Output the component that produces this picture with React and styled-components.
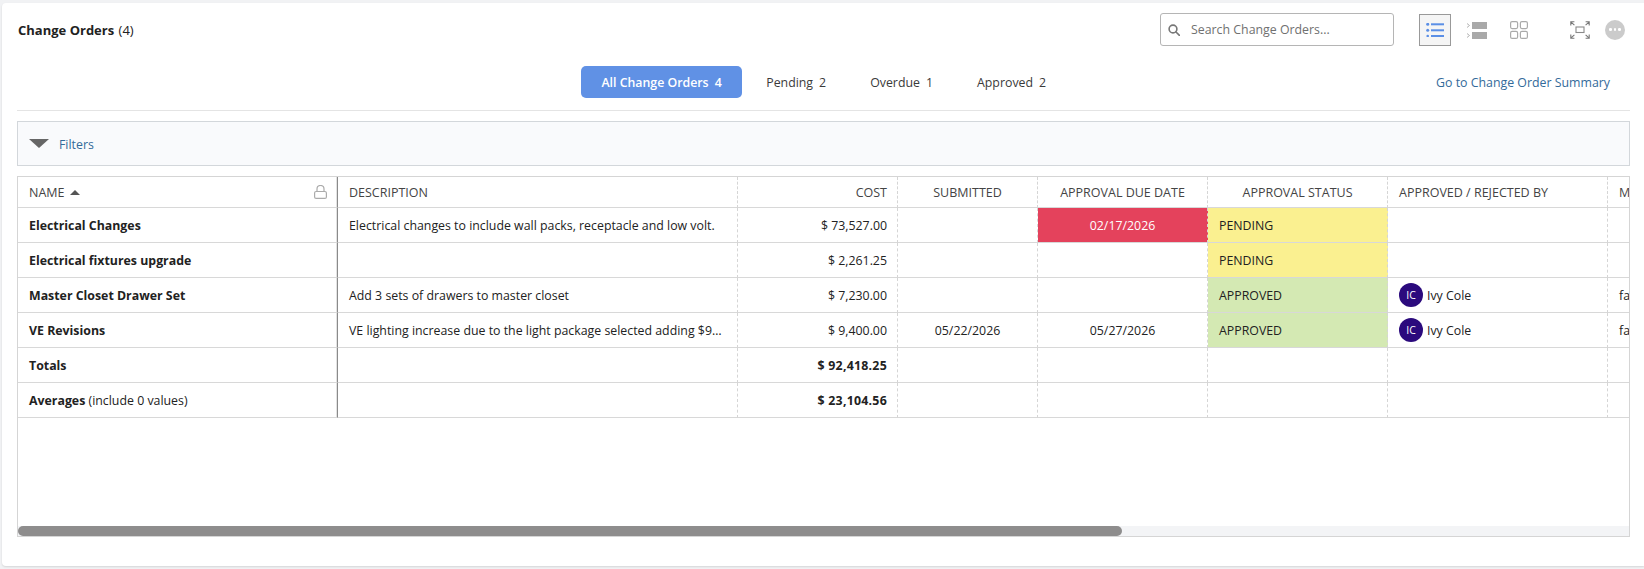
import React from 'react';
import styled, {createGlobalStyle} from 'styled-components';

const Global = createGlobalStyle`
html, body {
  margin: 0;
  padding: 0;
  background: #f1f2f4;
  font-family: "Open Sans", "Noto Sans", sans-serif;
  font-size: 12.35px;
  color: #222;
}
* { box-sizing: border-box; }
`

const Panel = styled.main`
margin: 3px 0 3px 2px;
height: 563px;
padding: 10px 14px 29px 15px;
background: #fff;
border-radius: 4px 0 0 4px;
box-shadow: 0 1px 2px rgba(0,0,0,.12);
`
const TopRow = styled.header`
display: flex;
align-items: center;
height: 33px;
padding-right: 5px;
`
const Title = styled.h1`
margin: 0;
padding: 0 0 0 1px;
font-size: 13px;
font-weight: 400;
color: #222;
flex: 1;
b { font-weight: 700; }
span { margin-left: 1px; }
`
const Search = styled.label`
display: flex;
align-items: center;
width: 234px;
height: 33px;
padding-left: 7px;
border: 1px solid #b5b5b5;
border-radius: 3px;
margin-right: 25px;
`
const SearchInput = styled.input`
border: 0;
outline: 0;
flex: 1;
min-width: 0;
margin-left: 9px;
font: inherit;
color: #333;
&::placeholder { color: #707070; opacity: 1; }
`
const ViewBtn = styled.button`
display: flex;
align-items: center;
justify-content: center;
width: 32px;
height: 32px;
padding: 0;
background: ${p => p.$active ? '#f5f5f5' : 'transparent'};
border: 1px solid ${p => p.$active ? '#999' : 'transparent'};
margin-right: ${p => p.$gap || 0}px;
cursor: pointer;
`
const MoreBtn = styled.button`
display: flex;
align-items: center;
justify-content: center;
gap: 2px;
width: 20px;
height: 20px;
padding: 0;
border: 0;
border-radius: 50%;
background: #cbcbcb;
margin-left: 9px;
i { width: 2.5px; height: 2.5px; border-radius: 50%; background: #fff; }
`
const TabRow = styled.nav`
display: grid;
grid-template-columns: 1fr auto 1fr;
align-items: center;
margin-top: 20px;
padding-bottom: 12px;
border-bottom: 1px solid #e4e4e4;
`
const Tabs = styled.div`
grid-column: 2;
display: flex;
padding-left: 4px;
`
const Tab = styled.button`
height: 32px;
padding: 0 ${p => p.$active ? 20.5 : 20}px;
margin-right: 4px;
border: 0;
border-radius: 5px;
font: inherit;
font-weight: ${p => p.$active ? 600 : 400};
color: ${p => p.$active ? '#fff' : '#3a3a3a'};
background: ${p => p.$active ? '#6091e5' : 'transparent'};
span { margin-left: 6px; }
`
const SummaryLink = styled.a`
justify-self: end;
margin-right: 20px;
color: #336a9a;
text-decoration: none;
`
const FilterBar = styled.div`
display: flex;
align-items: center;
gap: 10px;
height: 45px;
margin-top: 10px;
padding-left: 11px;
background: #f9fafc;
border: 1px solid #d3d7db;
color: #336a9a;
`
const FilterLabel = styled.span`
padding-top: 1px;
`
const Caret = styled.i`
width: 0;
height: 0;
border-left: 10px solid transparent;
border-right: 10px solid transparent;
border-top: 9px solid #666;
`
const Frame = styled.section`
display: flex;
flex-direction: column;
height: 361px;
margin-top: 10px;
border: 1px solid #d5d5d5;
`
const TableClip = styled.div`
flex: 1;
overflow: hidden;
`
const Table = styled.table`
table-layout: fixed;
width: 1690px;
border-collapse: separate;
border-spacing: 0;
`
const cellBase = `
  padding: 0 11px;
  border-bottom: 1px solid #d8d8d8;
  border-right: 1px dashed #d5d5d5;
  white-space: nowrap;
  overflow: hidden;
  text-overflow: ellipsis;
  &:first-child {
    border-right: 1px solid #8a8a8a;
    box-shadow: inset -1px 0 0 #e2e2e2;
  }
`
const Th = styled.th`
${cellBase}
height: 31px;
font-size: 12.5px;
font-weight: 400;
color: #444;
text-align: ${p => p.$align || 'left'};
padding-right: ${p => p.$align === 'right' ? 10 : 11}px;
`
const Td = styled.td`
${cellBase}
height: 35px;
color: #222;
text-align: ${p => p.$align || 'left'};
padding-right: ${p => p.$align === 'right' ? 10 : 11}px;
font-weight: ${p => p.$bold ? 700 : 400};
background: ${p => p.$bg || 'transparent'};
`
const Overdue = styled(Td)`
color: #fff;
background: #e4425c;
`
const TotalCell = styled(Td)`
letter-spacing: .25px;
`
const NameHead = styled.div`
display: flex;
align-items: center;
gap: 5px;
svg:last-child { margin-left: auto; margin-right: -1px; }
`
const Note = styled.span`
font-weight: 400;
`
const Person = styled.div`
display: flex;
align-items: center;
gap: 4px;
`
const Avatar = styled.span`
display: flex;
align-items: center;
justify-content: center;
width: 24px;
height: 24px;
border-radius: 50%;
background: #2b0a7d;
color: #fff;
font-size: 10.5px;
`
const Track = styled.div`
height: 10px;
background: #f3f4f6;
`
const Thumb = styled.div`
width: 1104px;
height: 10px;
border-radius: 5px;
background: #8e8d8d;
`

const SearchIcon = () => (
  <svg width="12" height="12" viewBox="0 0 12 12" fill="none" stroke="#777" strokeWidth="1.6">
    <circle cx="5" cy="5" r="3.9" />
    <path d="M8 8l3.4 3.4" strokeLinecap="round" />
  </svg>
)
const ListIcon = () => (
  <svg width="18" height="14" viewBox="0 0 18 14" fill="#5b8fe6">
    <circle cx="1.7" cy="1.3" r="1.5" />
    <circle cx="1.7" cy="7.3" r="1.5" />
    <circle cx="1.7" cy="13" r="1.3" />
    <rect x="5" y="0.3" width="13" height="2" />
    <rect x="5" y="6.3" width="13" height="2" />
    <rect x="5" y="12" width="13" height="2" />
  </svg>
)
const RowsIcon = () => (
  <svg width="20" height="18" viewBox="0 0 20 18">
    <path d="M0 2.5l2.5 2-2.5 2M0 12.5l2.5 2-2.5 2" fill="none" stroke="#aaa" strokeWidth="0.9" />
    <rect x="5" y="1" width="15" height="7" fill="#a9a9a9" />
    <rect x="5" y="11" width="15" height="7" fill="#a9a9a9" />
  </svg>
)
const GridIcon = () => (
  <svg width="18" height="18" viewBox="0 0 18 18" fill="none" stroke="#aaa" strokeWidth="1.2">
    <rect x="0.6" y="0.6" width="7" height="7" rx="1.5" />
    <rect x="10.4" y="0.6" width="7" height="7" rx="1.5" />
    <rect x="0.6" y="10.4" width="7" height="7" rx="1.5" />
    <rect x="10.4" y="10.4" width="7" height="7" rx="1.5" />
  </svg>
)
const ExpandIcon = () => (
  <svg width="20" height="18" viewBox="0 0 20 18" fill="none" stroke="#777" strokeWidth="1.1">
    <rect x="6" y="6" width="8" height="5.5" stroke="#8a8a8a" />
    <path d="M0.8 4.4V0.8H4.4M0.8 0.8l3.6 3.4" />
    <path d="M19.2 4.4V0.8H15.6M19.2 0.8l-3.6 3.4" />
    <path d="M0.8 13.6v3.6H4.4M0.8 17.2l3.6-3.4" />
    <path d="M19.2 13.6v3.6H15.6M19.2 17.2l-3.6-3.4" />
  </svg>
)
const SortIcon = () => (
  <svg width="10" height="5" viewBox="0 0 10 5" fill="#555"><path d="M5 0l5 5H0z" /></svg>
)
const LockIcon = () => (
  <svg width="13" height="14" viewBox="0 0 13 14" fill="none" stroke="#ababab" strokeWidth="1.2">
    <path d="M3 6.5V4a3.5 3.5 0 017 0v2.5" />
    <rect x="0.6" y="6.5" width="11.8" height="6.9" rx="1.5" />
  </svg>
)

const yellow = '#faf090'
const green = '#d4e9b3'

const rows = [
  {name: 'Electrical Changes', desc: 'Electrical changes to include wall packs, receptacle and low volt.', cost: '$ 73,527.00', due: '02/17/2026', overdue: true, status: 'PENDING'},
  {name: 'Electrical fixtures upgrade', desc: '', cost: '$ 2,261.25', status: 'PENDING'},
  {name: 'Master Closet Drawer Set', desc: 'Add 3 sets of drawers to master closet', cost: '$ 7,230.00', status: 'APPROVED', by: 'Ivy Cole'},
  {name: 'VE Revisions', desc: 'VE lighting increase due to the light package selected adding $9400.00 to the contract', cost: '$ 9,400.00', submitted: '05/22/2026', due: '05/27/2026', status: 'APPROVED', by: 'Ivy Cole'},
]

function App() {
  return (
    <>
      <Global />
      <Panel>
        <TopRow>
          <Title><b>Change Orders</b> <span>(4)</span></Title>
          <Search>
            <SearchIcon />
            <SearchInput placeholder="Search Change Orders..." />
          </Search>
          <ViewBtn $active $gap={10}><ListIcon /></ViewBtn>
          <ViewBtn $gap={10}><RowsIcon /></ViewBtn>
          <ViewBtn $gap={29}><GridIcon /></ViewBtn>
          <ViewBtn><ExpandIcon /></ViewBtn>
          <MoreBtn><i /><i /><i /></MoreBtn>
        </TopRow>
        <TabRow>
          <Tabs>
            <Tab $active>All Change Orders<span>4</span></Tab>
            <Tab>Pending<span>2</span></Tab>
            <Tab>Overdue<span>1</span></Tab>
            <Tab>Approved<span>2</span></Tab>
          </Tabs>
          <SummaryLink href="#">Go to Change Order Summary</SummaryLink>
        </TabRow>
        <FilterBar><Caret /><FilterLabel>Filters</FilterLabel></FilterBar>
        <Frame>
          <TableClip>
            <Table>
              <colgroup>
                <col width="320" /><col width="400" /><col width="160" /><col width="140" />
                <col width="170" /><col width="180" /><col width="220" /><col width="100" />
              </colgroup>
              <thead>
                <tr>
                  <Th><NameHead>NAME <SortIcon /><LockIcon /></NameHead></Th>
                  <Th>DESCRIPTION</Th>
                  <Th $align="right">COST</Th>
                  <Th $align="center">SUBMITTED</Th>
                  <Th $align="center">APPROVAL DUE DATE</Th>
                  <Th $align="center">APPROVAL STATUS</Th>
                  <Th>APPROVED / REJECTED BY</Th>
                  <Th>MANUAL</Th>
                </tr>
              </thead>
              <tbody>
                {rows.map((r, k) => (
                  <tr key={k}>
                    <Td $bold>{r.name}</Td>
                    <Td>{r.desc}</Td>
                    <Td $align="right">{r.cost}</Td>
                    <Td $align="center">{r.submitted}</Td>
                    {r.overdue
                      ? <Overdue $align="center">{r.due}</Overdue>
                      : <Td $align="center">{r.due}</Td>}
                    <Td $bg={r.status === 'PENDING' ? yellow : green}>{r.status}</Td>
                    <Td>{r.by && <Person><Avatar>IC</Avatar>{r.by}</Person>}</Td>
                    <Td>{r.by && 'false'}</Td>
                  </tr>
                ))}
                <tr>
                  <Td $bold>Totals</Td><Td /><TotalCell $bold $align="right">$ 92,418.25</TotalCell><Td /><Td /><Td /><Td /><Td />
                </tr>
                <tr>
                  <Td $bold>Averages <Note>(include 0 values)</Note></Td><Td /><TotalCell $bold $align="right">$ 23,104.56</TotalCell><Td /><Td /><Td /><Td /><Td />
                </tr>
              </tbody>
            </Table>
          </TableClip>
          <Track><Thumb /></Track>
        </Frame>
      </Panel>
    </>
  )
}

export default App;
